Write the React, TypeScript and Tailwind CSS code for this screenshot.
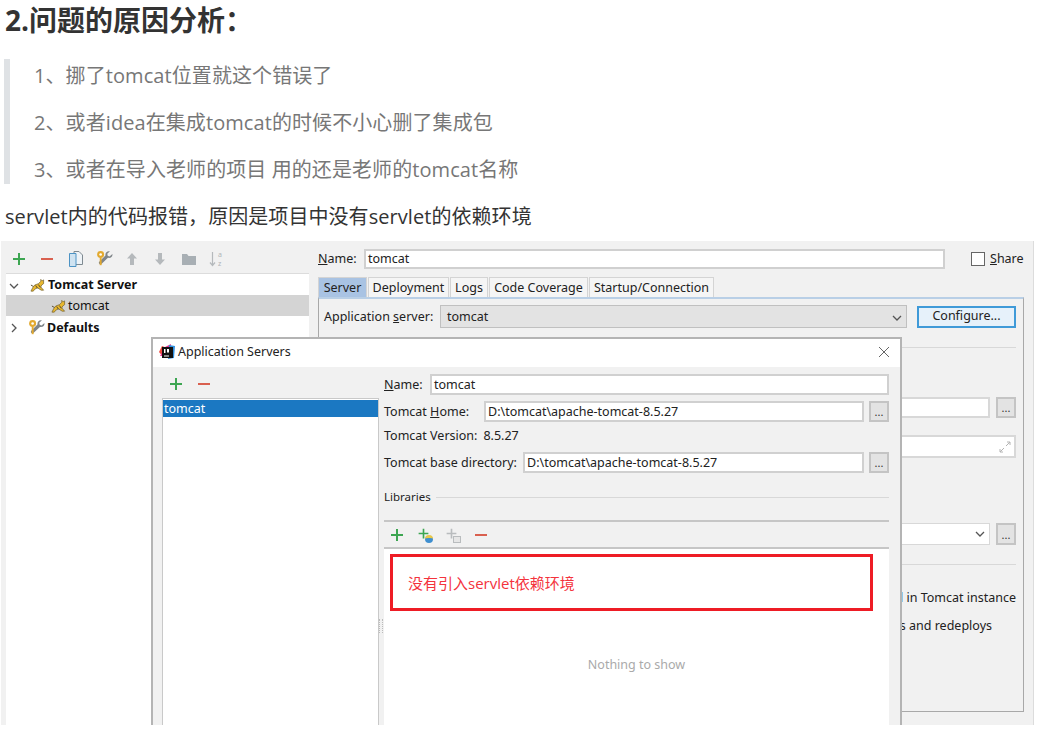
const ui = "font-['Noto_Sans','Noto_Sans_CJK_SC',sans-serif]"

function Plus({ className = 'w-4 h-4' }: { className?: string }) {
  return (
    <svg viewBox="0 0 16 16" className={className}>
      <path d="M8 2v12M2 8h12" stroke="#3da652" strokeWidth="2" fill="none" />
    </svg>
  )
}

function Minus() {
  return (
    <svg viewBox="0 0 16 16" className="w-4 h-4">
      <path d="M2 8h12" stroke="#d9604f" strokeWidth="2" fill="none" />
    </svg>
  )
}

function Copy() {
  return (
    <svg viewBox="0 0 16 18" className="w-4 h-[18px]">
      <path d="M6 1.500h5l3.500 3.500v9.500H6z" fill="#eef3f7" stroke="#7f8a91" />
      <path d="M1.500 3.500h6.500v13H1.500z" fill="#cfe3f1" stroke="#4c93c4" />
    </svg>
  )
}

function Wrench({ className = 'w-[18px] h-[18px] -mx-px' }: { className?: string }) {
  return (
    <svg viewBox="0 0 16 16" className={className}>
      <path d="M15.500 3.500l-2.600 2.200-1.600-.6-.4-1.700L13.300 1.200C11 .6 8.900 2.300 9.300 4.800L3.800 10.500c-1.200 1.300.6 3.100 1.900 1.900l5.800-5.400c2.500.5 4.300-1 4-3.500z" fill="#7f8589" />
      <circle cx="5" cy="4" r="3.100" fill="#e2a92f" />
      <circle cx="5" cy="4" r="1.200" fill="#fff" />
      <path d="M4.200 7h1.700v6.500H4.200z" fill="#e2a92f" />
    </svg>
  )
}

function Arrow({ down }: { down?: boolean }) {
  return (
    <svg viewBox="0 0 16 16" className="w-4 h-4">
      <path d={down ? 'M8 14L3 8.500h3V2h4v6.500h3z' : 'M8 2l5 5.500h-3V14H6V7.500H3z'} fill="#b5b9bc" />
    </svg>
  )
}

function Folder() {
  return (
    <svg viewBox="0 0 16 16" className="w-4 h-4">
      <path d="M1 3h5l1.500 2H15v9H1z" fill="#a8afb4" />
    </svg>
  )
}

function SortAz() {
  return (
    <svg viewBox="0 0 18 18" className="w-[18px] h-[18px] -mx-px">
      <path d="M4.500 2v13M2 12.500l2.500 3 2.500-3" stroke="#b5b9bc" strokeWidth="1.200" fill="none" />
      <text x="10" y="7" fontSize="7" fill="#b0b4b8" fontFamily="Noto Sans">a</text>
      <text x="10" y="16" fontSize="7" fill="#b0b4b8" fontFamily="Noto Sans">z</text>
    </svg>
  )
}

function Chevron({ open }: { open?: boolean }) {
  return (
    <svg viewBox="0 0 10 10" className="w-[10px] h-[10px]">
      <path d={open ? 'M1 3l4 4 4-4' : 'M3 1l4 4-4 4'} stroke="#555" strokeWidth="1.300" fill="none" />
    </svg>
  )
}

function TomcatIcon() {
  return (
    <svg viewBox="0 0 16 16" className="w-[15px] h-[15px] shrink-0">
      <path d="M1 14l2-4 2-2.500 4-1.500 2.500-2.500V1.500L13 3l1.500-1v4l-2 1.500-1 2 3 3.500h-2.500L8 10.500 5 12l-1.500 2z" fill="#e8b830" stroke="#6b5a2a" strokeWidth=".7" />
      <path d="M3.500 9L1 7.500M6 8l2 3M9 7l2 3" stroke="#54472a" strokeWidth="1" fill="none" />
    </svg>
  )
}

function IdeaIcon() {
  return (
    <svg viewBox="0 0 16 16" className="w-4 h-4 shrink-0">
      <path d="M0 8l3-6 5 2-3 10z" fill="#f0483e" />
      <path d="M1 12l5-9 6-3-1 12z" fill="#e8358f" />
      <path d="M10 1l6 1-1 12-6 1z" fill="#2f8fe0" />
      <path d="M3 3h11v11H3z" fill="#111" />
      <path d="M5 5h1.500v4H5zM8 5h2v3.500H8zM5 11.500h5v1H5z" fill="#fff" />
    </svg>
  )
}

function CloseIcon() {
  return (
    <svg viewBox="0 0 12 12" className="w-3 h-3">
      <path d="M1 1l10 10M11 1L1 11" stroke="#666" strokeWidth="1" fill="none" />
    </svg>
  )
}

function GlobePlus() {
  return (
    <span className="relative w-4 h-4">
      <Plus className="w-[13px] h-[13px]" />
      <span className="absolute right-0 bottom-0 w-2 h-2 rounded-full bg-[#3f8fd0] border-t-[3px] border-[#e8c84a]" />
    </span>
  )
}

function GreyPlus() {
  return (
    <span className="relative w-4 h-4">
      <svg viewBox="0 0 16 16" className="w-[13px] h-[13px]">
        <path d="M8 2v12M2 8h12" stroke="#b9bcbe" strokeWidth="2" fill="none" />
      </svg>
      <span className="absolute right-0 bottom-0 w-2 h-[7px] border border-[#b9bcbe] bg-[#e6e6e6]" />
    </span>
  )
}

function Field({ value, className = '' }: { value: string; className?: string }) {
  return (
    <div className={`flex items-center pl-[2px] bg-white border-2 border-[#d0d0d0] text-[#222] ${className}`}>
      {value}
    </div>
  )
}

function Dots({ className = '' }: { className?: string }) {
  return (
    <div className={`w-[20px] shrink-0 flex items-center justify-center bg-[#e3e3e3] border-2 border-[#c4c4c4] text-[11px] leading-none text-[#333] ${className}`}>
      ...
    </div>
  )
}

function Tab({ label, active, w }: { label: string; active?: boolean; w: string }) {
  return (
    <div className={`h-[20px] pt-[2px] flex items-center justify-center border border-[#d4d4d4] border-b-0 ${active ? 'bg-[#a9c3e3] text-[#222]' : 'bg-[#f5f5f5]'} ${w}`}>
      {label}
    </div>
  )
}

function Tree() {
  return (
    <div className="flex-1 mx-[5px] bg-white border-t border-[#dcdcdc] text-[#111]">
      <div className="h-[21px] flex items-center pl-[3px] pt-[2px]">
        <Chevron open />
        <span className="ml-[11px]"><TomcatIcon /></span>
        <span className="ml-[3px] font-bold">Tomcat Server</span>
      </div>
      <div className="h-[21px] flex items-center pl-[45px] pt-[2px] bg-[#d4d4d4]">
        <TomcatIcon />
        <span className="ml-[2px]">tomcat</span>
      </div>
      <div className="h-[21px] flex items-center pl-[3px] pt-[3px]">
        <Chevron />
        <span className="ml-[8px] h-[15px]"><Wrench className="w-[18px] h-[18px] -mt-[2px]" /></span>
        <span className="ml-[2px] font-bold">Defaults</span>
      </div>
    </div>
  )
}

function Dialog() {
  return (
    <div className="absolute left-[150px] top-[96px] w-[751px] h-[400px] flex flex-col bg-[#f1f1f1] border-2 border-[#b4b4b4] border-b-0">
      <div className="h-[28px] shrink-0 flex items-center bg-white pl-[6px] pr-[10px] pb-[2px] text-[#222]">
        <IdeaIcon />
        <span className="ml-[3px]">Application Servers</span>
        <div className="ml-auto"><CloseIcon /></div>
      </div>
      <div className="flex-1 flex min-h-0">
        <div className="w-[217px] ml-[9px] shrink-0 flex flex-col">
          <div className="h-[31px] shrink-0 flex items-center gap-[12px] pl-[6px] pt-[2px]">
            <Plus />
            <Minus />
          </div>
          <div className="flex-1 bg-white border border-[#c9c9c9] pt-px">
            <div className="h-[17px] pt-[2px] flex items-center pl-px bg-[#1b78c2] text-white">tomcat</div>
          </div>
        </div>
        <div className="relative w-[5px] shrink-0">
          <span className="absolute top-[252px] left-[0px] w-[4px] h-[14px] border-x border-dotted border-[#bbb]" />
        </div>
        <div className="flex-1 min-w-0 mr-[11px] flex flex-col text-[#222]">
          <div className="h-[21px] mt-[7px] shrink-0 flex items-center">
            <span className="w-[46px] shrink-0 pt-[2px]"><u>N</u>ame:</span>
            <Field value="tomcat" className="flex-1 h-[21px] pt-[2px]" />
          </div>
          <div className="h-[21px] mt-[6px] shrink-0 flex items-center">
            <span className="w-[100px] shrink-0 pt-[2px]">Tomcat <u>H</u>ome:</span>
            <Field value="D:\tomcat\apache-tomcat-8.5.27" className="flex-1 h-[21px] pt-[2px]" />
            <Dots className="h-[21px] ml-[5px]" />
          </div>
          <div className="h-[27px] pt-[2px] shrink-0 flex items-center">
            <span>Tomcat Version:</span>
            <span className="ml-[6px]">8.5.27</span>
          </div>
          <div className="h-[21px] mt-[3px] shrink-0 flex items-center">
            <span className="w-[139px] shrink-0 pt-[2px]">Tomcat base directory:</span>
            <Field value="D:\tomcat\apache-tomcat-8.5.27" className="flex-1 h-[21px] pt-[2px]" />
            <Dots className="h-[21px] ml-[5px]" />
          </div>
          <div className="h-[20px] mt-[13px] pt-[2px] shrink-0 flex items-center gap-[5px] text-[11.500px]">
            Libraries
            <span className="flex-1 h-px bg-[#d8d8d8]" />
          </div>
          <div className="h-[25px] mt-[14px] box-content shrink-0 flex items-center gap-[12px] pl-[5px] border-y-2 border-[#c6c6c6]">
            <Plus />
            <GlobePlus />
            <GreyPlus />
            <Minus />
          </div>
          <div className="flex-1 bg-white pt-[5px] flex flex-col">
            <div className="ml-[6px] mr-[16px] h-[57px] shrink-0 flex items-center pl-[15px] pt-[2px] border-[3px] border-[#ee1c25] text-[15px] text-[#f4333c] font-['Open_Sans','Noto_Sans_CJK_SC',sans-serif]">
              没有引入servlet依赖环境
            </div>
            <div className="mt-[48px] text-center text-[#aaa]">Nothing to show</div>
          </div>
        </div>
      </div>
    </div>
  )
}

function ServerPanel() {
  return (
    <div className="w-[706px] h-[415px] flex flex-col bg-[#f1f1f1] border border-[#a8a8a8] border-t-2 border-t-[#b9cfe6] pl-[5px] pr-[7px] text-[#222]">
      <div className="h-[23px] mt-[6px] shrink-0 flex items-center">
        <span className="w-[116px] shrink-0 pt-[2px]">Application <u>s</u>erver:</span>
        <div className="flex-1 h-[23px] flex items-center justify-between pl-[6px] pr-[4px] pt-[2px] bg-[#e3e3e3] border border-[#c0c0c0]">
          tomcat
          <Chevron open />
        </div>
        <div className="w-[99px] h-[22px] ml-[10px] flex items-center justify-center bg-[#e6f1fa] border-2 border-[#3f9ad8]">Configure...</div>
      </div>
      <div className="h-px mt-[19px] bg-[#d8d8d8]" />
      <div className="h-[21px] mt-[49px] shrink-0 flex items-center justify-end">
        <div className="w-[100px] h-[21px] bg-white border-2 border-[#d8d8d8]" />
        <Dots className="h-[21px] ml-[6px]" />
      </div>
      <div className="h-[23px] mt-[17px] ml-auto w-[130px] shrink-0 flex items-center justify-end pr-[3px] bg-white border-2 border-[#d8d8d8]">
        <svg viewBox="0 0 12 12" className="w-3 h-3">
          <path d="M7 5l4-4M8 1h3v3M5 7l-4 4M1 8v3h3" stroke="#b4b4b4" fill="none" />
        </svg>
      </div>
      <div className="h-[22px] mt-[65px] shrink-0 flex items-center justify-end">
        <div className="w-[100px] h-[22px] flex items-center justify-end pr-[4px] bg-white border border-[#d8d8d8]">
          <Chevron open />
        </div>
        <Dots className="h-[22px] ml-[6px]" />
      </div>
      <div className="h-px mt-[19px] bg-[#d8d8d8]" />
      <div className="mt-[23px] h-[20px] text-right leading-[20px]">d in Tomcat instance</div>
      <div className="mt-[8px] h-[20px] pr-[24px] text-right leading-[20px]">s and redeploys</div>
    </div>
  )
}

function IdeScreenshot() {
  return (
    <div className={`relative ml-px mt-[8px] w-[1033px] h-[484px] overflow-hidden flex bg-[#f1f1f1] text-[12.5px] leading-none ${ui}`}>
      <div className="w-[313px] shrink-0 flex flex-col">
        <div className="h-[32px] shrink-0 flex items-center pl-[10px] pt-[4px] gap-[12.300px]">
          <Plus />
          <Minus />
          <Copy />
          <Wrench />
          <Arrow />
          <Arrow down />
          <Folder />
          <SortAz />
        </div>
        <Tree />
      </div>
      <div className="ml-[4px] flex flex-col min-w-0">
        <div className="h-[20px] mt-[8px] shrink-0 flex items-center w-[706px] text-[#222]">
          <span className="w-[46px] shrink-0"><u>N</u>ame:</span>
          <Field value="tomcat" className="w-[581px] h-[20px]" />
          <span className="w-[14px] h-[14px] ml-[26px] bg-white border border-[#666]" />
          <span className="ml-[5px]"><u>S</u>hare</span>
        </div>
        <div className="h-[20px] mt-[8px] shrink-0 flex gap-px text-[#222]">
          <Tab label="Server" active w="w-[49px]" />
          <Tab label="Deployment" w="w-[81px]" />
          <Tab label="Logs" w="w-[38px]" />
          <Tab label="Code Coverage" w="w-[99px]" />
          <Tab label="Startup/Connection" w="w-[125px]" />
        </div>
        <ServerPanel />
      </div>
      <span className="absolute right-0 top-0 bottom-0 w-px bg-[#dcdcdc]" />
      <Dialog />
    </div>
  )
}

export default function App() {
  return (
    <div className="w-[1037px] h-[740px] overflow-hidden bg-white font-['Open_Sans','Noto_Sans_CJK_SC',sans-serif]">
      <h2 className="h-[40px] pl-[5px] text-[28px] leading-[40px] font-bold text-[#333]">2.问题的原因分析：</h2>

      <blockquote className="mt-[19px] ml-[4px] h-[125px] pl-[24px] pt-[1px] border-l-[6px] border-[#dfe2e5] flex flex-col gap-[15px] text-[20px] leading-[32px] tracking-[0.08px] text-[#777]">
        <p>1、挪了tomcat位置就这个错误了</p>
        <p>2、或者idea在集成tomcat的时候不小心删了集成包</p>
        <p>3、或者在导入老师的项目 用的还是老师的tomcat名称</p>
      </blockquote>

      <p className="mt-[17px] pl-[5px] text-[20px] leading-[32px] tracking-[0.06px] text-[#333]">servlet内的代码报错，原因是项目中没有servlet的依赖环境</p>

      <IdeScreenshot />
    </div>
  )
}
